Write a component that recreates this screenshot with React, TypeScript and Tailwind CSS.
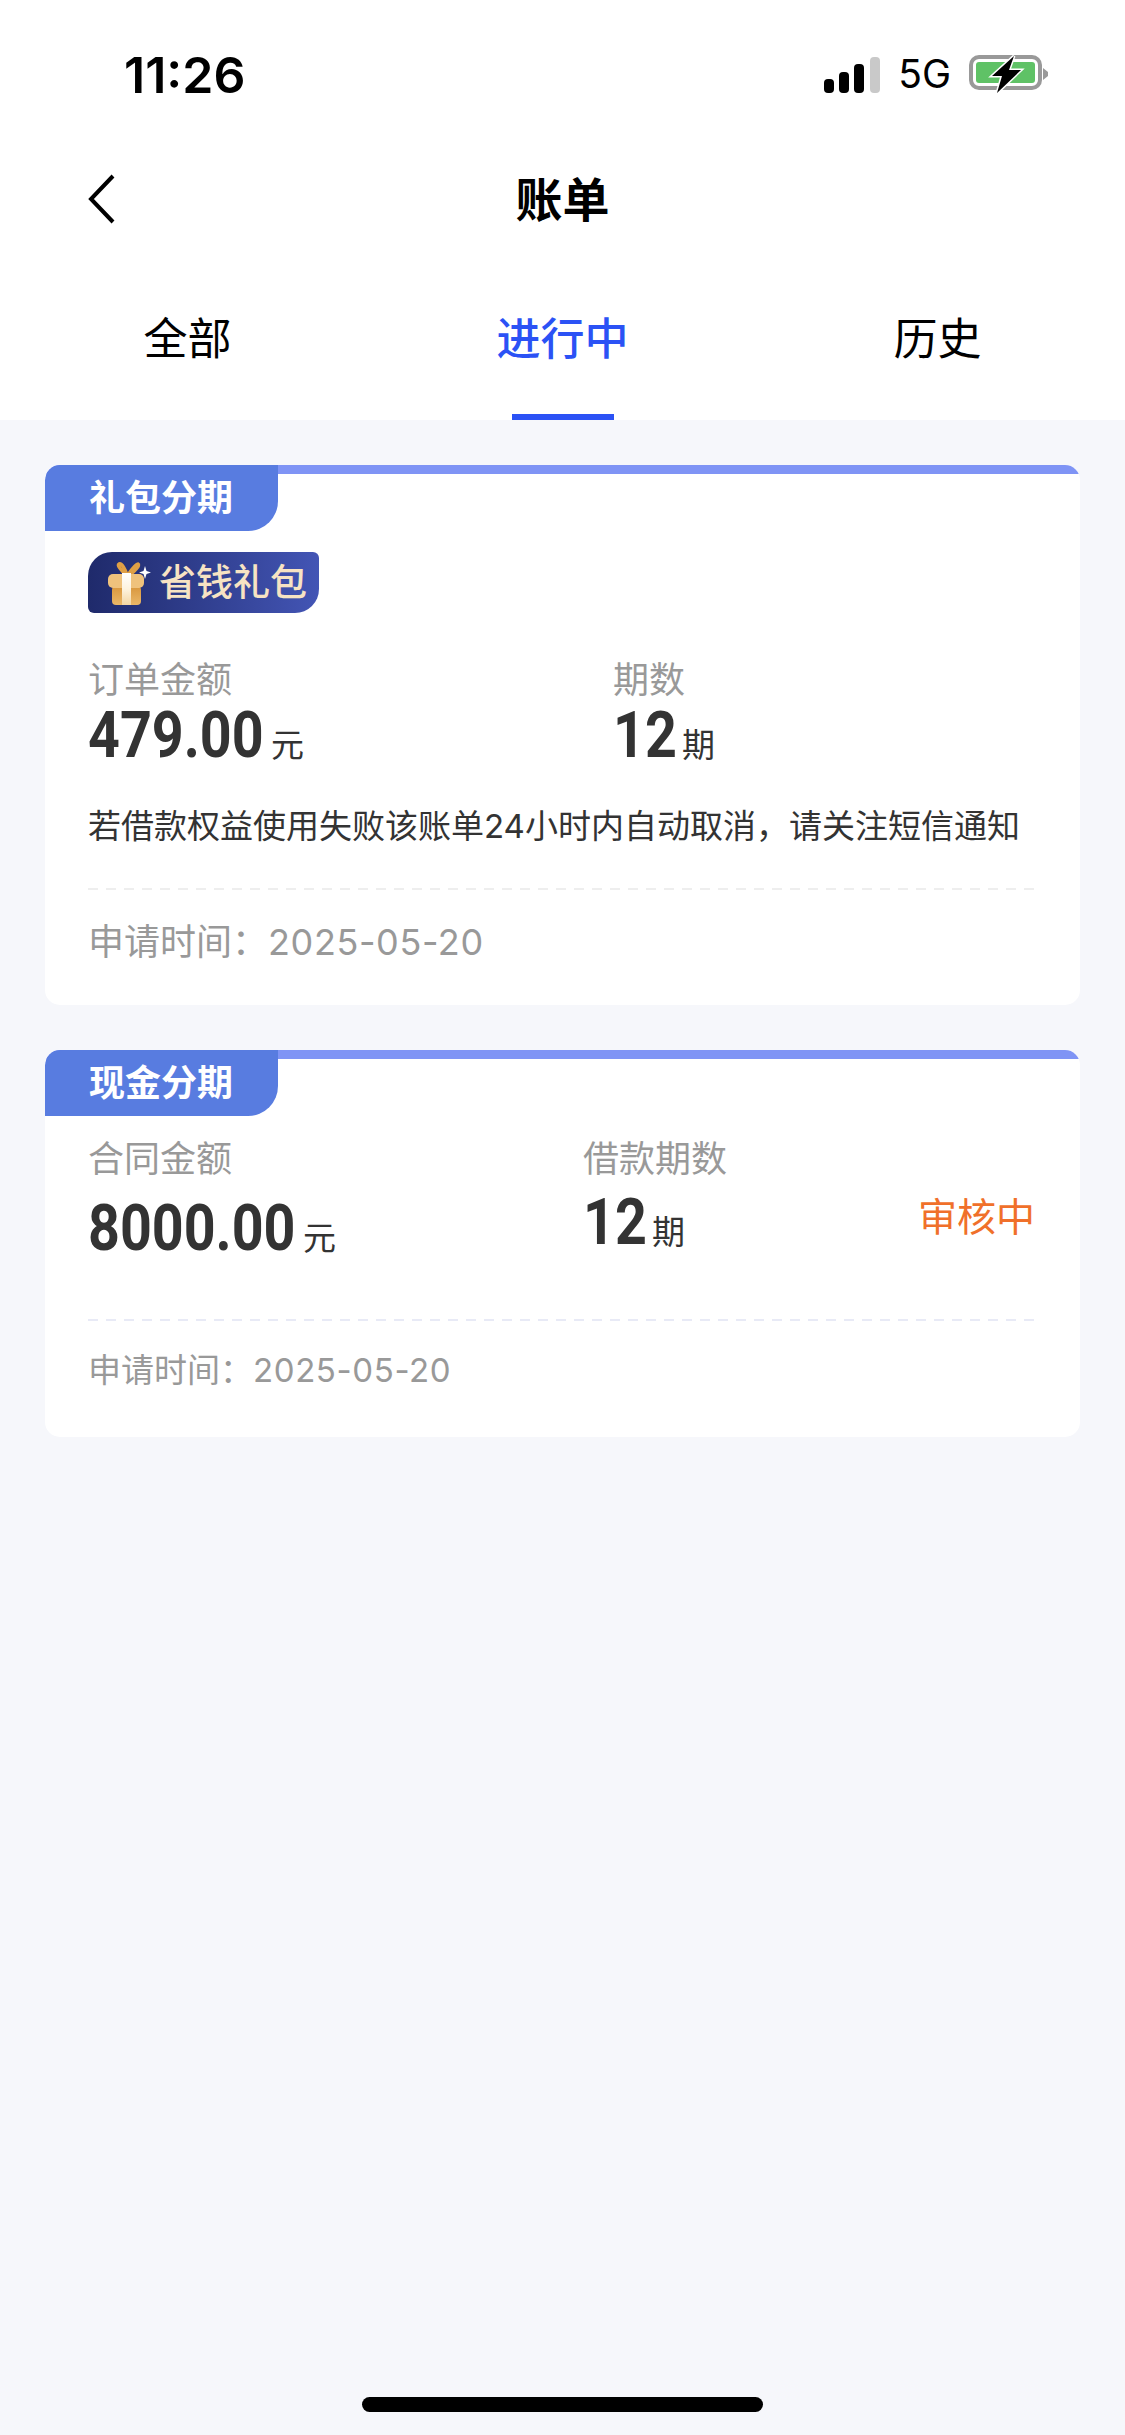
const sans = "font-['Inter','Noto_Sans_CJK_SC',sans-serif]";

function StatusBar() {
  return (
    <div className="h-[149px] flex items-start justify-between pl-[124px] pr-[76px] pt-[50px]">
      <span className="font-['Inter','Liberation_Sans',sans-serif] text-[50px] leading-[50px] font-semibold text-black">
        11:26
      </span>
      <div className="flex items-start gap-[18px] pt-[5px]">
        <svg className="mt-[2px]" width="56" height="36" viewBox="0 0 56 36">
          <rect x="0" y="22" width="10" height="14" rx="4" fill="#000" />
          <rect x="15" y="15" width="10" height="21" rx="4" fill="#000" />
          <rect x="30" y="7" width="10" height="29" rx="4" fill="#000" />
          <rect x="46" y="0" width="10" height="36" rx="4" fill="#c9c9c9" />
        </svg>
        <span className="font-['Inter','Liberation_Sans',sans-serif] text-[39px] leading-[38px] text-black">5G</span>
        <svg width="80" height="40" viewBox="0 0 80 40">
          <rect x="2" y="2" width="69" height="31" rx="8" fill="none" stroke="#999" strokeWidth="4" />
          <rect x="7" y="7" width="59" height="21" rx="3" fill="#5fc266" />
          <path d="M74 13 L79 17 L79 21 L74 25 Z" fill="#999" />
          <path
            d="M45 1 L23 21 L33 21 L28 38 L52 15 L40 15 Z"
            fill="#000"
            stroke="#fff"
            strokeWidth="3"
            paintOrder="stroke"
          />
        </svg>
      </div>
    </div>
  );
}

function Tabs() {
  const tabs = ["全部", "进行中", "历史"];
  return (
    <div className="grid grid-cols-3 h-[171px]">
      {tabs.map((t, i) => (
        <div key={t} className="flex flex-col items-center justify-end">
          <span className={`text-[44px] leading-[44px] mb-[53px] ${i === 1 ? "text-[#2b52f5] font-medium" : "text-black"}`}>
            {t}
          </span>
          {i === 1 ? <div className="w-[102px] h-[6px] bg-[#2b52f5]" /> : <div className="h-[6px]" />}
        </div>
      ))}
    </div>
  );
}

function GiftIcon() {
  return (
    <svg width="46" height="46" viewBox="0 0 46 46">
      <defs>
        <linearGradient id="giftBody" x1="0" y1="0" x2="0" y2="1">
          <stop offset="0" stopColor="#d8963c" />
          <stop offset="1" stopColor="#eab768" />
        </linearGradient>
        <linearGradient id="giftRibbon" x1="0" y1="0" x2="0" y2="1">
          <stop offset="0" stopColor="#ffffff" />
          <stop offset="0.5" stopColor="#fdf3df" />
          <stop offset="1" stopColor="#f3d6a3" />
        </linearGradient>
      </defs>
      <path d="M21 15 C15 9 12 5 14 4 C17 3 20 9 22 15" fill="none" stroke="#e0a045" strokeWidth="3.5" />
      <path d="M23 15 C27 9 31 4 33 4 C35 5 31 10 25 15" fill="none" stroke="#e0a045" strokeWidth="3.5" />
      <rect x="7" y="26" width="29" height="19" rx="4" fill="url(#giftBody)" />
      <rect x="3" y="14" width="36" height="14" rx="5" fill="#efc27c" />
      <rect x="17" y="13" width="9" height="32" fill="url(#giftRibbon)" />
      <path d="M40 6 L41.5 11 L46 12.5 L41.5 14 L40 19 L38.5 14 L34 12.5 L38.5 11 Z" fill="#fff" />
    </svg>
  );
}

function Badge({ label }: { label: string }) {
  return (
    <div className="absolute left-0 top-0 w-[233px] h-[66px] bg-[#587ce0] rounded-tl-[15px] rounded-br-[30px] flex items-center pl-[44px]">
      <span className="text-[36px] leading-[36px] font-semibold text-white">{label}</span>
    </div>
  );
}

function Amount({ value, unit, width }: { value: string; unit: string; width: string }) {
  return (
    <div className="flex items-baseline">
      {/* no condensed bold installed, so the digits are squeezed */}
      <span className={`inline-block whitespace-nowrap origin-left scale-x-[0.855] font-['Roboto',sans-serif] font-bold text-[#333] text-[65px] leading-[65px] ${width}`}>
        {value}
      </span>
      <span className="text-[33px] leading-[33px] text-[#333] ml-[10px]">{unit}</span>
    </div>
  );
}

function Dash({ color }: { color: string }) {
  return <div className={`h-[2px] ${color}`} />;
}

export default function App() {
  return (
    <div className={`${sans} w-[1125px] min-h-[2435px] bg-[#f6f7fb] flex flex-col`}>
      <div className="bg-white h-[420px]">
        <StatusBar />
        <div className="h-[100px] relative flex items-center justify-center">
          <svg className="absolute left-[84px] top-[23px]" width="34" height="54" viewBox="0 0 34 54">
            <path d="M29 4 L7 27 L29 50" fill="none" stroke="#000" strokeWidth="4" />
          </svg>
          <span className="text-[47px] leading-[47px] font-bold text-black">账单</span>
        </div>
        <Tabs />
      </div>

      {/* Card 1 */}
      <div className="mx-[45px] mt-[45px] h-[540px] bg-white rounded-[15px] relative overflow-hidden">
        <div className="h-[9px] bg-[#7f94f5]" />
        <Badge label="礼包分期" />
        <div className="px-[43px]">
          <div className="mt-[78px] w-[231px] h-[61px] rounded-tl-[24px] rounded-br-[24px] rounded-tr-[6px] rounded-bl-[6px] bg-gradient-to-r from-[#1f2a6b] to-[#4355b5] flex items-center pl-[17px] gap-[8px]">
            <GiftIcon />
            <span className="text-[37px] leading-[37px] font-medium text-[#f7e3c3]">省钱礼包</span>
          </div>
          <div className="flex mt-[47px]">
            <div className="w-[525px]">
              <div className="text-[36px] leading-[40px] text-[#999]">订单金额</div>
              <div className="mt-[3px]"><Amount value="479.00" unit="元" width="w-[173px]" /></div>
            </div>
            <div>
              <div className="text-[36px] leading-[40px] text-[#999]">期数</div>
              <div className="mt-[3px]"><Amount value="12" unit="期" width="w-[59px]" /></div>
            </div>
          </div>
          <div className="mt-[38px] text-[33px] leading-[40px] text-[#333] whitespace-nowrap">
            若借款权益使用失败该账单24小时内自动取消，请关注短信通知
          </div>
          <div className="mt-[42px]"><Dash color="bg-[repeating-linear-gradient(90deg,#eeeeee_0,#eeeeee_10px,transparent_10px,transparent_18px)]" /></div>
          <div className="mt-[32px] text-[36px] leading-[40px] text-[#999]">申请时间：<span className="tracking-[0.6px]">2025-05-20</span></div>
        </div>
      </div>

      {/* Card 2 */}
      <div className="mx-[45px] mt-[45px] h-[387px] bg-white rounded-[15px] relative overflow-hidden">
        <div className="h-[9px] bg-[#7f94f5]" />
        <Badge label="现金分期" />
        <div className="px-[43px]">
          <div className="flex mt-[80px]">
            <div className="w-[495px]">
              <div className="text-[36px] leading-[40px] text-[#999]">合同金额</div>
              <div className="mt-[17px]"><Amount value="8000.00" unit="元" width="w-[205px]" /></div>
            </div>
            <div>
              <div className="text-[36px] leading-[40px] text-[#999]">借款期数</div>
              <div className="mt-[11px]"><Amount value="12" unit="期" width="w-[59px]" /></div>
            </div>
            <div className="ml-auto mr-[2px] mt-[58px] text-[39px] leading-[39px] text-[#f0702a]">审核中</div>
          </div>
          <div className="mt-[58px]"><Dash color="bg-[repeating-linear-gradient(90deg,#e8eaf6_0,#e8eaf6_10px,transparent_10px,transparent_18px)]" /></div>
          <div className="mt-[30px] text-[33px] leading-[38px] text-[#999]">申请时间：<span className="tracking-[0.6px]">2025-05-20</span></div>
        </div>
      </div>

      <div className="mt-auto flex justify-center pb-[23px]">
        <div className="w-[401px] h-[15px] rounded-[8px] bg-black" />
      </div>
    </div>
  );
}
